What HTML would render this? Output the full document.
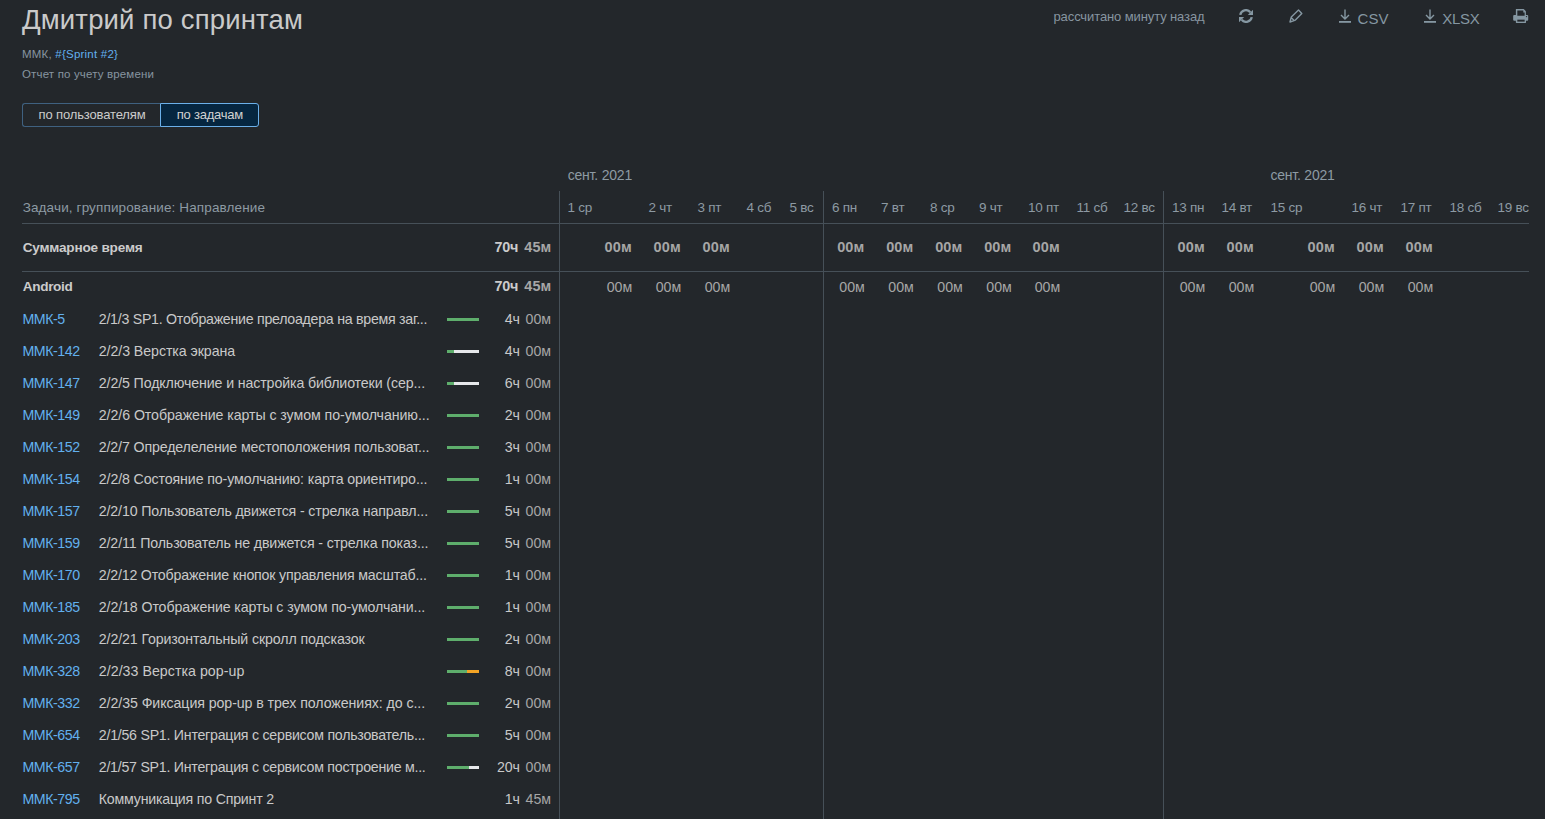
<!DOCTYPE html>
<html><head><meta charset="utf-8"><style>
html,body{margin:0;padding:0;}
body{width:1545px;height:819px;background:#23272b;overflow:hidden;position:relative;font-family:"Liberation Sans",sans-serif;}
.t{position:absolute;white-space:nowrap;}
.hl{position:absolute;height:1px;background:#465058;}
.vl{position:absolute;width:1px;background:#465058;}
.bar{position:absolute;height:3px;}
</style></head><body>
<div class="t" style="left:22.00px;top:6px;font-size:27.5px;line-height:27.5px;color:#cacaca;letter-spacing:0.161px;">Дмитрий по спринтам</div>
<div class="t" style="left:22.00px;top:49px;font-size:11.5px;line-height:11.5px;color:#8795a0;letter-spacing:0.217px;">ММК, <span style="color:#62b0ee">#{Sprint #2}</span></div>
<div class="t" style="left:22.00px;top:69px;font-size:11.5px;line-height:11.5px;color:#8795a0;letter-spacing:0.159px;">Отчет по учету времени</div>
<div style="position:absolute;left:22px;top:103px;width:138px;height:24px;box-sizing:border-box;border:1px solid #3f6180;border-right:none;border-radius:3px 0 0 3px;"></div>
<div style="position:absolute;left:160px;top:103px;width:99px;height:24px;box-sizing:border-box;border:1px solid #6cb0ea;border-radius:0 3px 3px 0;background:#062640;"></div>
<div class="t" style="left:38.50px;top:108px;font-size:13px;line-height:13px;color:#cccccc;letter-spacing:-0.136px;">по пользователям</div>
<div class="t" style="left:176.80px;top:108px;font-size:13px;line-height:13px;color:#d2d2d2;letter-spacing:-0.235px;">по задачам</div>
<div class="t" style="left:1053.50px;top:10px;font-size:13px;line-height:13px;color:#8795a0;letter-spacing:-0.110px;">рассчитано минуту назад</div>
<div class="t" style="left:1357.60px;top:11px;font-size:15px;line-height:15px;color:#8597a2;letter-spacing:-0.009px;">CSV</div>
<div class="t" style="left:1442.20px;top:11px;font-size:15px;line-height:15px;color:#8597a2;letter-spacing:-0.236px;">XLSX</div>
<svg style="position:absolute;left:1239px;top:9px" width="14" height="14" viewBox="0 0 14 14"><path d="M1.25 5.9A5.75 5.75 0 0 1 11.3 3.2" fill="none" stroke="#8597a2" stroke-width="2.3"/><path d="M14.1 0.6V5.9H8.8z" fill="#8597a2"/><path d="M12.75 8.1A5.75 5.75 0 0 1 2.7 10.8" fill="none" stroke="#8597a2" stroke-width="2.3"/><path d="M-0.1 13.4V8.1H5.2z" fill="#8597a2"/></svg>
<svg style="position:absolute;left:1289px;top:9px" width="14" height="14" viewBox="0 0 14 14"><path d="M9.5 1.1L12.8 4.5L6.4 11.1L1 13L2.3 7.9Z M2.3 8.8L5.2 11.6" fill="none" stroke="#8597a2" stroke-width="1.4" stroke-linejoin="round"/></svg>
<svg style="position:absolute;left:1339px;top:9px" width="12" height="14" viewBox="0 0 12 14"><path d="M6 0.5V10 M2 6L6 10L10 6" fill="none" stroke="#8597a2" stroke-width="1.4"/><rect x="0" y="12" width="12" height="1.8" fill="#8597a2"/></svg>
<svg style="position:absolute;left:1424px;top:9px" width="12" height="14" viewBox="0 0 12 14"><path d="M6 0.5V10 M2 6L6 10L10 6" fill="none" stroke="#8597a2" stroke-width="1.4"/><rect x="0" y="12" width="12" height="1.8" fill="#8597a2"/></svg>
<svg style="position:absolute;left:1513px;top:8px" width="16" height="16" viewBox="0 0 16 16"><rect x="0.17" y="7.04" width="15.03" height="5.6" rx="1" fill="#8597a2"/><path d="M2.86 0.9H10.7L12.9 3.2V8H2.86Z" fill="#8597a2"/><path d="M4.33 2.4H10.3V4.5H11.65V7.77H4.33Z" fill="#23272b"/><circle cx="13.5" cy="8.6" r="0.65" fill="#23272b"/><rect x="2.86" y="11.2" width="10.14" height="3.8" rx="0.4" fill="#8597a2"/><rect x="4.33" y="11.67" width="7.32" height="1.96" fill="#23272b"/></svg>
<div class="t" style="left:567.70px;top:168px;font-size:14px;line-height:14px;color:#8d9aa3;letter-spacing:-0.198px;">сент. 2021</div>
<div class="t" style="left:1270.40px;top:168px;font-size:14px;line-height:14px;color:#8d9aa3;letter-spacing:-0.198px;">сент. 2021</div>
<div class="t" style="left:22.70px;top:201px;font-size:13.5px;line-height:13.5px;color:#8d9aa3;letter-spacing:0.132px;">Задачи, группирование: Направление</div>
<div class="hl" style="left:22px;top:223px;width:1507px"></div>
<div class="hl" style="left:22px;top:271px;width:1507px"></div>
<div class="vl" style="left:559px;top:191px;height:628px"></div>
<div class="vl" style="left:823px;top:191px;height:628px"></div>
<div class="vl" style="left:1163px;top:191px;height:628px"></div>
<div class="t" style="left:567.40px;top:201px;font-size:13.5px;line-height:13.5px;color:#8d9aa3;letter-spacing:-0.238px;">1 ср</div>
<div class="t" style="right:913.15px;top:240px;font-size:14.5px;line-height:14.5px;color:#a6a6a6;font-weight:700;letter-spacing:0.152px;">00м</div>
<div class="t" style="right:912.84px;top:280px;font-size:14.2px;line-height:14.2px;color:#a6a6a6;letter-spacing:-0.044px;">00м</div>
<div class="t" style="left:648.40px;top:201px;font-size:13.5px;line-height:13.5px;color:#8d9aa3;letter-spacing:-0.230px;">2 чт</div>
<div class="t" style="right:864.15px;top:240px;font-size:14.5px;line-height:14.5px;color:#a6a6a6;font-weight:700;letter-spacing:0.152px;">00м</div>
<div class="t" style="right:863.84px;top:280px;font-size:14.2px;line-height:14.2px;color:#a6a6a6;letter-spacing:-0.044px;">00м</div>
<div class="t" style="left:697.40px;top:201px;font-size:13.5px;line-height:13.5px;color:#8d9aa3;letter-spacing:-0.230px;">3 пт</div>
<div class="t" style="right:815.15px;top:240px;font-size:14.5px;line-height:14.5px;color:#a6a6a6;font-weight:700;letter-spacing:0.152px;">00м</div>
<div class="t" style="right:814.84px;top:280px;font-size:14.2px;line-height:14.2px;color:#a6a6a6;letter-spacing:-0.044px;">00м</div>
<div class="t" style="left:746.40px;top:201px;font-size:13.5px;line-height:13.5px;color:#8d9aa3;letter-spacing:-0.238px;">4 сб</div>
<div class="t" style="left:789.40px;top:201px;font-size:13.5px;line-height:13.5px;color:#8d9aa3;letter-spacing:-0.230px;">5 вс</div>
<div class="t" style="left:832.00px;top:201px;font-size:13.5px;line-height:13.5px;color:#8d9aa3;letter-spacing:-0.242px;">6 пн</div>
<div class="t" style="right:680.55px;top:240px;font-size:14.5px;line-height:14.5px;color:#a6a6a6;font-weight:700;letter-spacing:0.152px;">00м</div>
<div class="t" style="right:680.24px;top:280px;font-size:14.2px;line-height:14.2px;color:#a6a6a6;letter-spacing:-0.044px;">00м</div>
<div class="t" style="left:881.00px;top:201px;font-size:13.5px;line-height:13.5px;color:#8d9aa3;letter-spacing:-0.227px;">7 вт</div>
<div class="t" style="right:631.55px;top:240px;font-size:14.5px;line-height:14.5px;color:#a6a6a6;font-weight:700;letter-spacing:0.152px;">00м</div>
<div class="t" style="right:631.24px;top:280px;font-size:14.2px;line-height:14.2px;color:#a6a6a6;letter-spacing:-0.044px;">00м</div>
<div class="t" style="left:930.00px;top:201px;font-size:13.5px;line-height:13.5px;color:#8d9aa3;letter-spacing:-0.238px;">8 ср</div>
<div class="t" style="right:582.55px;top:240px;font-size:14.5px;line-height:14.5px;color:#a6a6a6;font-weight:700;letter-spacing:0.152px;">00м</div>
<div class="t" style="right:582.24px;top:280px;font-size:14.2px;line-height:14.2px;color:#a6a6a6;letter-spacing:-0.044px;">00м</div>
<div class="t" style="left:979.00px;top:201px;font-size:13.5px;line-height:13.5px;color:#8d9aa3;letter-spacing:-0.230px;">9 чт</div>
<div class="t" style="right:533.55px;top:240px;font-size:14.5px;line-height:14.5px;color:#a6a6a6;font-weight:700;letter-spacing:0.152px;">00м</div>
<div class="t" style="right:533.24px;top:280px;font-size:14.2px;line-height:14.2px;color:#a6a6a6;letter-spacing:-0.044px;">00м</div>
<div class="t" style="left:1028.00px;top:201px;font-size:13.5px;line-height:13.5px;color:#8d9aa3;letter-spacing:-0.241px;">10 пт</div>
<div class="t" style="right:485.15px;top:240px;font-size:14.5px;line-height:14.5px;color:#a6a6a6;font-weight:700;letter-spacing:0.152px;">00м</div>
<div class="t" style="right:484.84px;top:280px;font-size:14.2px;line-height:14.2px;color:#a6a6a6;letter-spacing:-0.044px;">00м</div>
<div class="t" style="left:1076.40px;top:201px;font-size:13.5px;line-height:13.5px;color:#8d9aa3;letter-spacing:-0.241px;">11 сб</div>
<div class="t" style="left:1123.40px;top:201px;font-size:13.5px;line-height:13.5px;color:#8d9aa3;letter-spacing:-0.241px;">12 вс</div>
<div class="t" style="left:1171.90px;top:201px;font-size:13.5px;line-height:13.5px;color:#8d9aa3;letter-spacing:-0.250px;">13 пн</div>
<div class="t" style="right:340.15px;top:240px;font-size:14.5px;line-height:14.5px;color:#a6a6a6;font-weight:700;letter-spacing:0.152px;">00м</div>
<div class="t" style="right:339.84px;top:280px;font-size:14.2px;line-height:14.2px;color:#a6a6a6;letter-spacing:-0.044px;">00м</div>
<div class="t" style="left:1221.40px;top:201px;font-size:13.5px;line-height:13.5px;color:#8d9aa3;letter-spacing:-0.237px;">14 вт</div>
<div class="t" style="right:291.15px;top:240px;font-size:14.5px;line-height:14.5px;color:#a6a6a6;font-weight:700;letter-spacing:0.152px;">00м</div>
<div class="t" style="right:290.84px;top:280px;font-size:14.2px;line-height:14.2px;color:#a6a6a6;letter-spacing:-0.044px;">00м</div>
<div class="t" style="left:1270.40px;top:201px;font-size:13.5px;line-height:13.5px;color:#8d9aa3;letter-spacing:-0.247px;">15 ср</div>
<div class="t" style="right:210.15px;top:240px;font-size:14.5px;line-height:14.5px;color:#a6a6a6;font-weight:700;letter-spacing:0.152px;">00м</div>
<div class="t" style="right:209.84px;top:280px;font-size:14.2px;line-height:14.2px;color:#a6a6a6;letter-spacing:-0.044px;">00м</div>
<div class="t" style="left:1351.40px;top:201px;font-size:13.5px;line-height:13.5px;color:#8d9aa3;letter-spacing:-0.241px;">16 чт</div>
<div class="t" style="right:161.15px;top:240px;font-size:14.5px;line-height:14.5px;color:#a6a6a6;font-weight:700;letter-spacing:0.152px;">00м</div>
<div class="t" style="right:160.84px;top:280px;font-size:14.2px;line-height:14.2px;color:#a6a6a6;letter-spacing:-0.044px;">00м</div>
<div class="t" style="left:1400.40px;top:201px;font-size:13.5px;line-height:13.5px;color:#8d9aa3;letter-spacing:-0.241px;">17 пт</div>
<div class="t" style="right:112.15px;top:240px;font-size:14.5px;line-height:14.5px;color:#a6a6a6;font-weight:700;letter-spacing:0.152px;">00м</div>
<div class="t" style="right:111.84px;top:280px;font-size:14.2px;line-height:14.2px;color:#a6a6a6;letter-spacing:-0.044px;">00м</div>
<div class="t" style="left:1449.40px;top:201px;font-size:13.5px;line-height:13.5px;color:#8d9aa3;letter-spacing:-0.247px;">18 сб</div>
<div class="t" style="left:1497.40px;top:201px;font-size:13.5px;line-height:13.5px;color:#8d9aa3;letter-spacing:-0.241px;">19 вс</div>
<div class="t" style="left:22.70px;top:241px;font-size:13.6px;line-height:13.6px;color:#cbcbcb;font-weight:700;letter-spacing:-0.207px;">Суммарное время</div>
<div class="t" style="left:22.70px;top:280px;font-size:13.6px;line-height:13.6px;color:#cbcbcb;font-weight:700;letter-spacing:-0.325px;">Android</div>
<div class="t" style="right:1026.95px;top:240px;font-size:14.4px;line-height:14.4px;color:#cbcbcb;font-weight:700;letter-spacing:-0.253px;">70ч</div>
<div class="t" style="right:993.85px;top:240px;font-size:14.4px;line-height:14.4px;color:#a6a6a6;font-weight:700;letter-spacing:0.053px;">45м</div>
<div class="t" style="right:1026.95px;top:279px;font-size:14.4px;line-height:14.4px;color:#cbcbcb;font-weight:700;letter-spacing:-0.253px;">70ч</div>
<div class="t" style="right:993.85px;top:279px;font-size:14.4px;line-height:14.4px;color:#a6a6a6;font-weight:700;letter-spacing:0.053px;">45м</div>
<div class="t" style="left:22.40px;top:312px;font-size:14.2px;line-height:14.2px;color:#62b0ee;letter-spacing:-0.412px;">ММК-5</div>
<div class="t" style="left:98.80px;top:312px;font-size:14.2px;line-height:14.2px;color:#c9c9c9;letter-spacing:-0.267px;">2/1/3 SP1. Отображение прелоадера на время заг...</div>
<div class="bar" style="left:447px;top:318px;width:32px;background:#5eae6c"></div>
<div class="t" style="right:1025.10px;top:312px;font-size:14.2px;line-height:14.2px;color:#c9c9c9;letter-spacing:-0.102px;">4ч</div>
<div class="t" style="right:993.91px;top:312px;font-size:14.2px;line-height:14.2px;color:#a6a6a6;letter-spacing:-0.010px;">00м</div>
<div class="t" style="left:22.40px;top:344px;font-size:14.2px;line-height:14.2px;color:#62b0ee;letter-spacing:-0.412px;">ММК-142</div>
<div class="t" style="left:98.80px;top:344px;font-size:14.2px;line-height:14.2px;color:#c9c9c9;letter-spacing:-0.070px;">2/2/3 Верстка экрана</div>
<div class="bar" style="left:447px;top:350px;width:7px;background:#5eae6c"></div>
<div class="bar" style="left:454px;top:350px;width:25px;background:#e6e8eb"></div>
<div class="t" style="right:1025.10px;top:344px;font-size:14.2px;line-height:14.2px;color:#c9c9c9;letter-spacing:-0.102px;">4ч</div>
<div class="t" style="right:993.91px;top:344px;font-size:14.2px;line-height:14.2px;color:#a6a6a6;letter-spacing:-0.010px;">00м</div>
<div class="t" style="left:22.40px;top:376px;font-size:14.2px;line-height:14.2px;color:#62b0ee;letter-spacing:-0.412px;">ММК-147</div>
<div class="t" style="left:98.80px;top:376px;font-size:14.2px;line-height:14.2px;color:#c9c9c9;letter-spacing:-0.115px;">2/2/5 Подключение и настройка библиотеки (сер...</div>
<div class="bar" style="left:447px;top:382px;width:7px;background:#5eae6c"></div>
<div class="bar" style="left:454px;top:382px;width:25px;background:#e6e8eb"></div>
<div class="t" style="right:1025.10px;top:376px;font-size:14.2px;line-height:14.2px;color:#c9c9c9;letter-spacing:-0.102px;">6ч</div>
<div class="t" style="right:993.91px;top:376px;font-size:14.2px;line-height:14.2px;color:#a6a6a6;letter-spacing:-0.010px;">00м</div>
<div class="t" style="left:22.40px;top:408px;font-size:14.2px;line-height:14.2px;color:#62b0ee;letter-spacing:-0.412px;">ММК-149</div>
<div class="t" style="left:98.80px;top:408px;font-size:14.2px;line-height:14.2px;color:#c9c9c9;letter-spacing:-0.068px;">2/2/6 Отображение карты с зумом по-умолчанию...</div>
<div class="bar" style="left:447px;top:414px;width:32px;background:#5eae6c"></div>
<div class="t" style="right:1025.10px;top:408px;font-size:14.2px;line-height:14.2px;color:#c9c9c9;letter-spacing:-0.102px;">2ч</div>
<div class="t" style="right:993.91px;top:408px;font-size:14.2px;line-height:14.2px;color:#a6a6a6;letter-spacing:-0.010px;">00м</div>
<div class="t" style="left:22.40px;top:440px;font-size:14.2px;line-height:14.2px;color:#62b0ee;letter-spacing:-0.412px;">ММК-152</div>
<div class="t" style="left:98.80px;top:440px;font-size:14.2px;line-height:14.2px;color:#c9c9c9;letter-spacing:-0.135px;">2/2/7 Определеление местоположения пользоват...</div>
<div class="bar" style="left:447px;top:446px;width:32px;background:#5eae6c"></div>
<div class="t" style="right:1025.10px;top:440px;font-size:14.2px;line-height:14.2px;color:#c9c9c9;letter-spacing:-0.102px;">3ч</div>
<div class="t" style="right:993.91px;top:440px;font-size:14.2px;line-height:14.2px;color:#a6a6a6;letter-spacing:-0.010px;">00м</div>
<div class="t" style="left:22.40px;top:472px;font-size:14.2px;line-height:14.2px;color:#62b0ee;letter-spacing:-0.412px;">ММК-154</div>
<div class="t" style="left:98.80px;top:472px;font-size:14.2px;line-height:14.2px;color:#c9c9c9;letter-spacing:-0.112px;">2/2/8 Состояние по-умолчанию: карта ориентиро...</div>
<div class="bar" style="left:447px;top:478px;width:32px;background:#5eae6c"></div>
<div class="t" style="right:1025.10px;top:472px;font-size:14.2px;line-height:14.2px;color:#c9c9c9;letter-spacing:-0.102px;">1ч</div>
<div class="t" style="right:993.91px;top:472px;font-size:14.2px;line-height:14.2px;color:#a6a6a6;letter-spacing:-0.010px;">00м</div>
<div class="t" style="left:22.40px;top:504px;font-size:14.2px;line-height:14.2px;color:#62b0ee;letter-spacing:-0.412px;">ММК-157</div>
<div class="t" style="left:98.80px;top:504px;font-size:14.2px;line-height:14.2px;color:#c9c9c9;letter-spacing:-0.136px;">2/2/10 Пользователь движется - стрелка направл...</div>
<div class="bar" style="left:447px;top:510px;width:32px;background:#5eae6c"></div>
<div class="t" style="right:1025.10px;top:504px;font-size:14.2px;line-height:14.2px;color:#c9c9c9;letter-spacing:-0.102px;">5ч</div>
<div class="t" style="right:993.91px;top:504px;font-size:14.2px;line-height:14.2px;color:#a6a6a6;letter-spacing:-0.010px;">00м</div>
<div class="t" style="left:22.40px;top:536px;font-size:14.2px;line-height:14.2px;color:#62b0ee;letter-spacing:-0.412px;">ММК-159</div>
<div class="t" style="left:98.80px;top:536px;font-size:14.2px;line-height:14.2px;color:#c9c9c9;letter-spacing:-0.131px;">2/2/11 Пользователь не движется - стрелка показ...</div>
<div class="bar" style="left:447px;top:542px;width:32px;background:#5eae6c"></div>
<div class="t" style="right:1025.10px;top:536px;font-size:14.2px;line-height:14.2px;color:#c9c9c9;letter-spacing:-0.102px;">5ч</div>
<div class="t" style="right:993.91px;top:536px;font-size:14.2px;line-height:14.2px;color:#a6a6a6;letter-spacing:-0.010px;">00м</div>
<div class="t" style="left:22.40px;top:568px;font-size:14.2px;line-height:14.2px;color:#62b0ee;letter-spacing:-0.412px;">ММК-170</div>
<div class="t" style="left:98.80px;top:568px;font-size:14.2px;line-height:14.2px;color:#c9c9c9;letter-spacing:-0.190px;">2/2/12 Отображение кнопок управления масштаб...</div>
<div class="bar" style="left:447px;top:574px;width:32px;background:#5eae6c"></div>
<div class="t" style="right:1025.10px;top:568px;font-size:14.2px;line-height:14.2px;color:#c9c9c9;letter-spacing:-0.102px;">1ч</div>
<div class="t" style="right:993.91px;top:568px;font-size:14.2px;line-height:14.2px;color:#a6a6a6;letter-spacing:-0.010px;">00м</div>
<div class="t" style="left:22.40px;top:600px;font-size:14.2px;line-height:14.2px;color:#62b0ee;letter-spacing:-0.412px;">ММК-185</div>
<div class="t" style="left:98.80px;top:600px;font-size:14.2px;line-height:14.2px;color:#c9c9c9;letter-spacing:-0.105px;">2/2/18 Отображение карты с зумом по-умолчани...</div>
<div class="bar" style="left:447px;top:606px;width:32px;background:#5eae6c"></div>
<div class="t" style="right:1025.10px;top:600px;font-size:14.2px;line-height:14.2px;color:#c9c9c9;letter-spacing:-0.102px;">1ч</div>
<div class="t" style="right:993.91px;top:600px;font-size:14.2px;line-height:14.2px;color:#a6a6a6;letter-spacing:-0.010px;">00м</div>
<div class="t" style="left:22.40px;top:632px;font-size:14.2px;line-height:14.2px;color:#62b0ee;letter-spacing:-0.412px;">ММК-203</div>
<div class="t" style="left:98.80px;top:632px;font-size:14.2px;line-height:14.2px;color:#c9c9c9;letter-spacing:-0.115px;">2/2/21 Горизонтальный скролл подсказок</div>
<div class="bar" style="left:447px;top:638px;width:32px;background:#5eae6c"></div>
<div class="t" style="right:1025.10px;top:632px;font-size:14.2px;line-height:14.2px;color:#c9c9c9;letter-spacing:-0.102px;">2ч</div>
<div class="t" style="right:993.91px;top:632px;font-size:14.2px;line-height:14.2px;color:#a6a6a6;letter-spacing:-0.010px;">00м</div>
<div class="t" style="left:22.40px;top:664px;font-size:14.2px;line-height:14.2px;color:#62b0ee;letter-spacing:-0.412px;">ММК-328</div>
<div class="t" style="left:98.80px;top:664px;font-size:14.2px;line-height:14.2px;color:#c9c9c9;letter-spacing:0.036px;">2/2/33 Верстка pop-up</div>
<div class="bar" style="left:447px;top:670px;width:20px;background:#5eae6c"></div>
<div class="bar" style="left:467px;top:670px;width:12px;background:#f3a425"></div>
<div class="t" style="right:1025.10px;top:664px;font-size:14.2px;line-height:14.2px;color:#c9c9c9;letter-spacing:-0.102px;">8ч</div>
<div class="t" style="right:993.91px;top:664px;font-size:14.2px;line-height:14.2px;color:#a6a6a6;letter-spacing:-0.010px;">00м</div>
<div class="t" style="left:22.40px;top:696px;font-size:14.2px;line-height:14.2px;color:#62b0ee;letter-spacing:-0.412px;">ММК-332</div>
<div class="t" style="left:98.80px;top:696px;font-size:14.2px;line-height:14.2px;color:#c9c9c9;letter-spacing:-0.076px;">2/2/35 Фиксация pop-up в трех положениях: до с...</div>
<div class="bar" style="left:447px;top:702px;width:32px;background:#5eae6c"></div>
<div class="t" style="right:1025.10px;top:696px;font-size:14.2px;line-height:14.2px;color:#c9c9c9;letter-spacing:-0.102px;">2ч</div>
<div class="t" style="right:993.91px;top:696px;font-size:14.2px;line-height:14.2px;color:#a6a6a6;letter-spacing:-0.010px;">00м</div>
<div class="t" style="left:22.40px;top:728px;font-size:14.2px;line-height:14.2px;color:#62b0ee;letter-spacing:-0.412px;">ММК-654</div>
<div class="t" style="left:98.80px;top:728px;font-size:14.2px;line-height:14.2px;color:#c9c9c9;letter-spacing:-0.252px;">2/1/56 SP1. Интеграция с сервисом пользователь...</div>
<div class="bar" style="left:447px;top:734px;width:32px;background:#5eae6c"></div>
<div class="t" style="right:1025.10px;top:728px;font-size:14.2px;line-height:14.2px;color:#c9c9c9;letter-spacing:-0.102px;">5ч</div>
<div class="t" style="right:993.91px;top:728px;font-size:14.2px;line-height:14.2px;color:#a6a6a6;letter-spacing:-0.010px;">00м</div>
<div class="t" style="left:22.40px;top:760px;font-size:14.2px;line-height:14.2px;color:#62b0ee;letter-spacing:-0.412px;">ММК-657</div>
<div class="t" style="left:98.80px;top:760px;font-size:14.2px;line-height:14.2px;color:#c9c9c9;letter-spacing:-0.254px;">2/1/57 SP1. Интеграция с сервисом построение м...</div>
<div class="bar" style="left:447px;top:766px;width:22px;background:#5eae6c"></div>
<div class="bar" style="left:469px;top:766px;width:10px;background:#e6e8eb"></div>
<div class="t" style="right:1025.10px;top:760px;font-size:14.2px;line-height:14.2px;color:#c9c9c9;letter-spacing:-0.104px;">20ч</div>
<div class="t" style="right:993.91px;top:760px;font-size:14.2px;line-height:14.2px;color:#a6a6a6;letter-spacing:-0.010px;">00м</div>
<div class="t" style="left:22.40px;top:792px;font-size:14.2px;line-height:14.2px;color:#62b0ee;letter-spacing:-0.412px;">ММК-795</div>
<div class="t" style="left:98.80px;top:792px;font-size:14.2px;line-height:14.2px;color:#c9c9c9;letter-spacing:-0.215px;">Коммуникация по Спринт 2</div>
<div class="t" style="right:1025.10px;top:792px;font-size:14.2px;line-height:14.2px;color:#c9c9c9;letter-spacing:-0.102px;">1ч</div>
<div class="t" style="right:993.91px;top:792px;font-size:14.2px;line-height:14.2px;color:#a6a6a6;letter-spacing:-0.010px;">45м</div>
</body></html>
